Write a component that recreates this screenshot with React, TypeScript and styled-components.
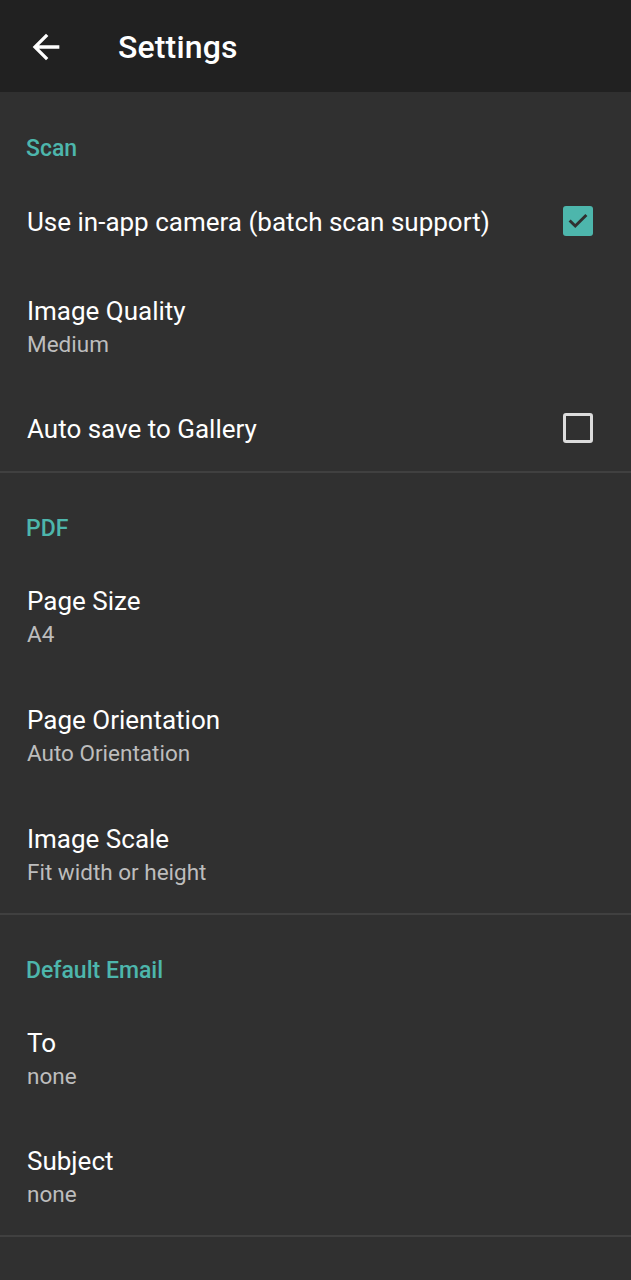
import React from "react";
import styled, {createGlobalStyle} from "styled-components";

const GlobalStyle = createGlobalStyle`
  html, body {
    margin: 0;
    padding: 0;
    background-color: #303030;
  }
  body {
    font-family: Roboto, "Noto Sans", "Liberation Sans", sans-serif;
    -webkit-font-smoothing: antialiased;
  }
`;

const Page = styled.div`
  width: 631px;
  min-height: 1280px;
  background-color: #303030;
  display: flex;
  flex-direction: column;
`;

const AppBar = styled.header`
  height: 92px;
  flex: 0 0 92px;
  background-color: #212121;
  display: flex;
  align-items: center;
  padding-left: 26px;
  box-sizing: border-box;
`;

const BackButton = styled.button`
  width: 40px;
  height: 40px;
  padding: 0;
  border: none;
  background: none;
  display: flex;
  align-items: center;
  justify-content: center;
  margin-top: 1px;
  cursor: pointer;
`;

const Title = styled.h1`
  margin: 2px 0 0 52px;
  font-size: 32px;
  font-weight: 500;
  color: #ffffff;
  letter-spacing: 0.15px;
`;

const Section = styled.section`
  display: flex;
  flex-direction: column;
  border-bottom: 2px solid #404040;
`;

const CategoryTitle = styled.div<{ $first?: boolean }>`
  height: 84px;
  box-sizing: border-box;
  padding: ${(p) => (p.$first ? 43 : 42)}px 26px 0;
  font-size: 23px;
  line-height: 28px;
  font-weight: 500;
  color: #4db6ac;
`;

const Row = styled.div<{ $height: number }>`
  height: ${(p) => p.$height}px;
  box-sizing: border-box;
  padding: 0 38px 0 27px;
  display: flex;
  align-items: center;
  justify-content: space-between;
`;

const RowText = styled.div`
  display: flex;
  flex-direction: column;
`;

const RowTitle = styled.div`
  font-size: 26px;
  line-height: 32px;
  color: #ffffff;
`;

const RowSummary = styled.div`
  font-size: 22.5px;
  line-height: 28px;
  color: #bdbdbd;
  margin-top: 3px;
`;

const CheckBox = styled.span<{ $checked: boolean }>`
  width: 30px;
  height: 30px;
  box-sizing: border-box;
  border-radius: 3px;
  display: flex;
  align-items: center;
  justify-content: center;
  margin-top: -2px;
  background-color: ${(p) => (p.$checked ? "#4db6ac" : "transparent")};
  border: ${(p) => (p.$checked ? "none" : "3px solid #dcdcdc")};
`;

const ArrowBack = () => (
    <svg width="40" height="40" viewBox="0 0 24 24">
        <path d="M20 11H7.83l5.59-5.59L12 4l-8 8 8 8 1.41-1.41L7.83 13H20v-2z" fill="#ffffff" />
    </svg>
);

const Check = () => (
    <svg width="22" height="22" viewBox="0 0 24 24">
        <path d="M4 12.5l5 5L20 6.5" fill="none" stroke="#303030" strokeWidth="3.2" strokeLinecap="square" />
    </svg>
);

interface Pref {
    title: string;
    summary?: string;
    checked?: boolean;
    height: number;
}

interface Group {
    name: string;
    items: Pref[];
}

const groups: Group[] = [
    {
        name: "Scan",
        items: [
            {title: "Use in-app camera (batch scan support)", checked: true, height: 91},
            {title: "Image Quality", summary: "Medium", height: 119},
            {title: "Auto save to Gallery", checked: false, height: 85},
        ],
    },
    {
        name: "PDF",
        items: [
            {title: "Page Size", summary: "A4", height: 119},
            {title: "Page Orientation", summary: "Auto Orientation", height: 119},
            {title: "Image Scale", summary: "Fit width or height", height: 118},
        ],
    },
    {
        name: "Default Email",
        items: [
            {title: "To", summary: "none", height: 119},
            {title: "Subject", summary: "none", height: 117},
        ],
    },
];

const App: React.FC = () => {
    return (
        <Page>
            <GlobalStyle />
            <AppBar>
                <BackButton aria-label="Back">
                    <ArrowBack />
                </BackButton>
                <Title>Settings</Title>
            </AppBar>
            {groups.map((group, i) => (
                <Section key={group.name}>
                    <CategoryTitle $first={i === 0}>{group.name}</CategoryTitle>
                    {group.items.map((item) => (
                        <Row key={item.title} $height={item.height}>
                            <RowText>
                                <RowTitle>{item.title}</RowTitle>
                                {item.summary && <RowSummary>{item.summary}</RowSummary>}
                            </RowText>
                            {item.checked !== undefined && (
                                <CheckBox $checked={item.checked}>
                                    {item.checked && <Check />}
                                </CheckBox>
                            )}
                        </Row>
                    ))}
                </Section>
            ))}
        </Page>
    );
};

export default App;
